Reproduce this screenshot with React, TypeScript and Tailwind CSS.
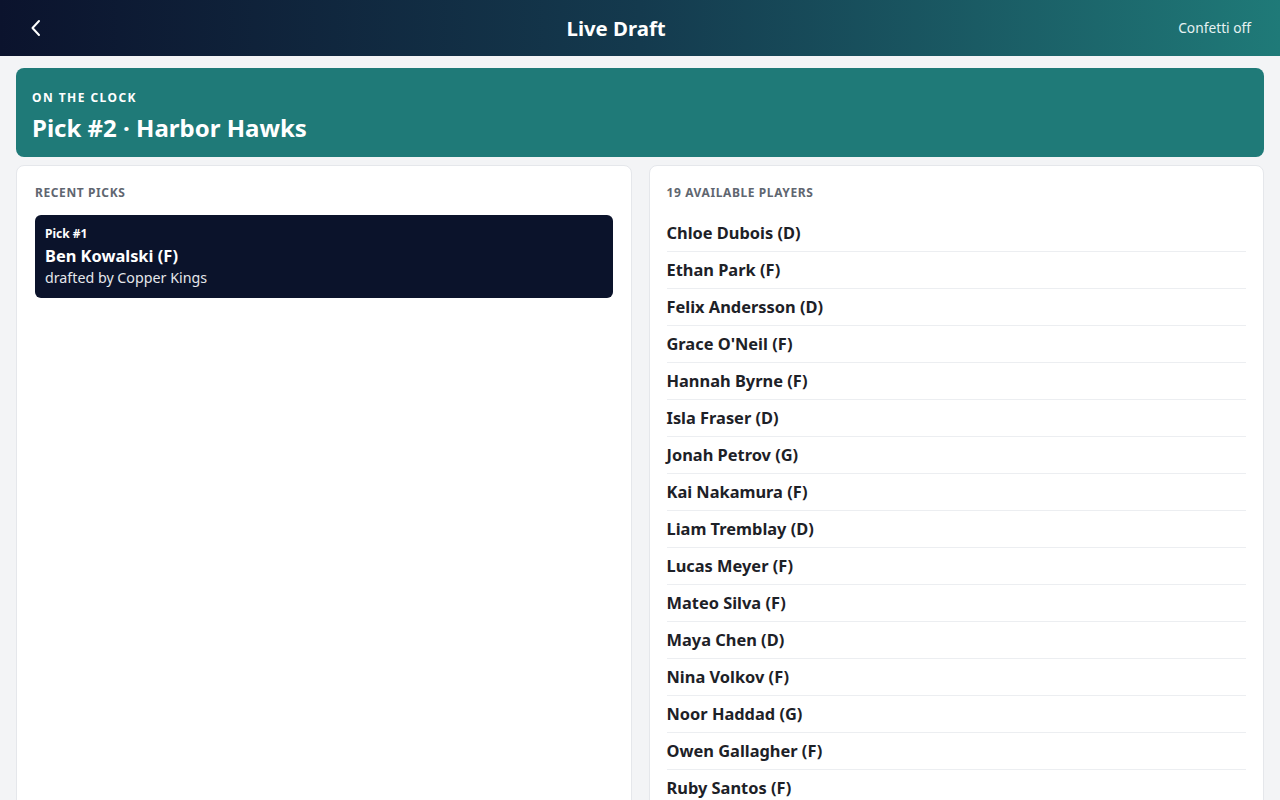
import React from "react";

const AVAILABLE_COUNT = 19;

const players = [
  "Chloe Dubois (D)",
  "Ethan Park (F)",
  "Felix Andersson (D)",
  "Grace O'Neil (F)",
  "Hannah Byrne (F)",
  "Isla Fraser (D)",
  "Jonah Petrov (G)",
  "Kai Nakamura (F)",
  "Liam Tremblay (D)",
  "Lucas Meyer (F)",
  "Mateo Silva (F)",
  "Maya Chen (D)",
  "Nina Volkov (F)",
  "Noor Haddad (G)",
  "Owen Gallagher (F)",
  "Ruby Santos (F)",
];

export default function App() {
  return (
    <div
      className="h-[800px] overflow-hidden bg-[#f3f4f6] flex flex-col"
      style={{ fontFamily: '"Noto Sans", "Open Sans", sans-serif' }}
    >
      {/* top bar */}
      <header className="h-14 shrink-0 flex items-center justify-between pl-[29px] pr-[29px] bg-gradient-to-r from-[#0b132d] via-[#143a4e] to-[#1f7a78] text-white">
        <button className="w-[25px] flex items-center" aria-label="Back">
          <svg width="14" height="20" viewBox="0 0 14 20" fill="none">
            <path d="M10 3 L3.5 10 L10 17" stroke="white" strokeWidth="2" strokeLinecap="round" strokeLinejoin="round" />
          </svg>
        </button>
        <h1 className="text-[20.4px] font-bold leading-none">Live Draft</h1>
        <span className="text-[13.75px] text-[#e6f2f2]">Confetti off</span>
      </header>

      <main className="flex flex-col px-4 pt-3 gap-[8px]">
        {/* on the clock banner */}
        <section className="shrink-0 rounded-lg bg-[#1f7a78] text-white px-4 pt-[22px] pb-[13px]">
          <div className="text-[12px] font-bold tracking-[0.12em] leading-4">ON THE CLOCK</div>
          <div className="text-[24px] font-bold leading-8 mt-[6px]">Pick #2 · Harbor Hawks</div>
        </section>

        <div className="grid grid-cols-2 gap-[17px] items-stretch">
          {/* recent picks */}
          <section className="bg-white rounded-lg border border-[#e5e7eb] px-[18px] pt-[19px]">
            <h2 className="text-[12px] font-bold tracking-[0.05em] text-[#5f6670] leading-4">RECENT PICKS</h2>
            <div className="mt-[14px] rounded-md bg-[#0b132b] text-white px-[10px] pt-[11px] pb-[9px]">
              <div className="text-[12px] font-bold leading-[16px]">Pick #1</div>
              <div className="text-[16.4px] font-bold leading-[22px] mt-[3px]">Ben Kowalski (F)</div>
              <div className="text-[14.25px] leading-[22px] text-[#e5e7eb]">drafted by Copper Kings</div>
            </div>
          </section>

          {/* available players */}
          <section className="bg-white rounded-lg border border-[#e5e7eb] px-[17px] pt-[19px] pb-4">
            <h2 className="text-[12px] font-bold tracking-[0.05em] text-[#5f6670] leading-4">
              {AVAILABLE_COUNT} AVAILABLE PLAYERS
            </h2>
            <ul className="mt-[14px]">
              {players.map((p) => (
                <li
                  key={p}
                  className="h-[37px] flex items-center border-b border-[#eceef1] text-[16.4px] font-bold text-[#1d2127]"
                >
                  {p}
                </li>
              ))}
            </ul>
          </section>
        </div>
      </main>
    </div>
  );
}
